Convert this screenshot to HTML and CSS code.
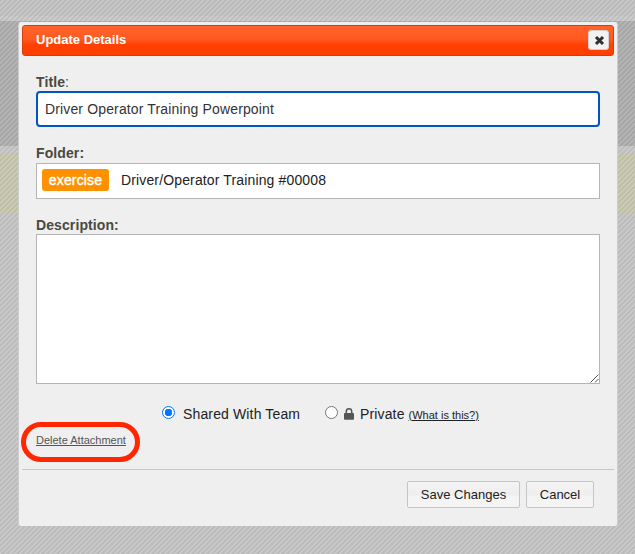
FILE: index.html
```html
<!DOCTYPE html>
<html lang="en">
<head>
<meta charset="utf-8">
<title>Update Details</title>
<link rel="stylesheet" href="styles.css">
</head>
<body>
<main class="dialog">
  <header class="titlebar">
    <h1>Update Details</h1>
    <button class="close" aria-label="Close"><svg width="11" height="11" viewBox="0 0 11 11"><path d="M2 2L9 9M9 2L2 9" stroke="#303030" stroke-width="3.1"/></svg></button>
  </header>
  <form class="form">
    <label class="label" for="title"><b>Title</b>:</label>
    <input class="title-input" id="title" type="text" value="Driver Operator Training Powerpoint">
    <div class="label folder-label"><b>Folder:</b></div>
    <div class="folder"><span class="tag">exercise</span><span>Driver/Operator Training #00008</span></div>
    <label class="label description-label" for="description"><b>Description:</b></label>
    <div class="area-wrap">
      <textarea class="area" id="description"></textarea>
      <svg class="grip" width="9" height="9" viewBox="0 0 9 9"><path d="M.5 8.5L8.5 .5M5 8.5L8.5 5" stroke="#555" stroke-width="1"/></svg>
    </div>
    <div class="sharing">
      <span class="radio checked"></span><span class="shared">Shared With Team</span>
      <span class="radio"></span>
      <svg class="lock" width="10" height="12" viewBox="0 0 10 12"><path d="M2.3 6V3.5a2.7 2.7 0 0 1 5.4 0V6" fill="none" stroke="#555" stroke-width="1.5"/><rect y="5" width="10" height="6.7" rx=".8" fill="#555"/></svg>
      <span class="private">Private</span><a class="help">(What is this?)</a>
    </div>
    <div class="delete-row"><a class="delete">Delete Attachment<span class="ring"></span></a></div>
  </form>
  <footer class="actions"><button class="button save">Save Changes</button><button class="button cancel">Cancel</button></footer>
</main>
</body>
</html>
```
FILE: styles.css
```css
* { box-sizing: border-box; }
html { height: 100%; }
body {
  margin: 0;
  height: 554px;
  padding: 22px 17px 0 18px;
  overflow: hidden;
  font: 14px/16px "Liberation Sans", Arial, sans-serif;
  color: #222;
  background:
    linear-gradient(135deg, #0000000d 25%, #ffffff12 25% 50%, #0000000d 50% 75%, #ffffff12 75%) 0 0 / 5px 5px,
    linear-gradient(#c5c5c5 0 16px, #cacaca 16px 21px, #b0b0b0 21px 146px, #c8c8c8 146px 153px, #c9c8b0 153px 213px, #c6c6c6 213px);
}
.dialog {
  height: 504px;
  padding: 3px 3px 0;
  background: #efefef;
  border-left: 1px solid #ccc;
  border-right: 1px solid #ccc;
  border-radius: 3px;
}
.titlebar {
  height: 31px;
  padding: 0 4px 0 13px;
  display: flex;
  align-items: center;
  justify-content: space-between;
  border: 1px solid #d33e0b;
  border-radius: 3px;
  background: linear-gradient(#ff632c, #ff5a20 45%, #ff4000 65%, #ff4000);
}
h1 { margin: 0 0 2px; color: #fff; font-size: 13px; line-height: 16px; }
.close {
  width: 21px; height: 20px; margin-bottom: 1px; padding: 0 0 0 1px;
  display: flex; align-items: center; justify-content: center;
  border: 1px solid #d2cfcc; border-radius: 3px;
  background: #f2f2f2;
}
.form { display: block; padding: 18px 14px 0; }
.label { display: block; height: 17px; color: #494940; letter-spacing: .1px; }
.title-input {
  display: block; width: 564px; height: 36px; padding: 0 7px;
  border: 2px solid #0054c4; border-radius: 4px; outline: 0;
  background: #fff; color: #333; font: inherit; letter-spacing: .14px;
}
.folder-label { height: 18px; margin-top: 18px; }
.folder {
  height: 36px; padding: 0 5px 2px; display: flex; align-items: center; gap: 12px;
  border: 1px solid #b5b5b5; background: #fff; letter-spacing: .14px;
}
.tag {
  width: 67px; height: 22px; line-height: 22px; text-align: center;
  background: #ff9100; color: #fff; border-radius: 3px; -webkit-text-stroke: .4px #fff;
}
.description-label { margin-top: 18px; }
.area-wrap { position: relative; height: 150px; }
.area { display: block; width: 564px; height: 150px; border: 1px solid #b5b5b5; background: #fff; resize: none; outline: 0; }
.grip { position: absolute; right: 1px; bottom: 1px; }
.sharing { display: flex; align-items: center; height: 24px; margin: 18px 0 0 126px; letter-spacing: .14px; }
.radio { width: 13px; height: 13px; margin-bottom: 3px; border: 1px solid #767676; border-radius: 50%; background: #fff; }
.checked { border-color: #0075ff; background: radial-gradient(circle, #0075ff 3.5px, #fff 4px); }
.shared { width: 142px; margin-left: 8px; }
.lock { margin: 0 6px 1px 6px; }
.help { margin: 1px 0 0 4px; font-size: 11px; letter-spacing: 0; text-decoration: underline; }
.delete-row { height: 43px; padding-top: 5px; }
.delete { position: relative; display: inline-block; font-size: 11px; color: #555; text-decoration: underline; }
.ring { position: absolute; left: -15px; top: -10px; width: 119px; height: 40px; border: 5px solid #ff2600; border-radius: 20px; }
.actions { border-top: 1px solid #c6c6c6; padding: 11px 20px 0; display: flex; gap: 6px; justify-content: flex-end; }
.button {
  height: 27px; padding: 0 0 1px; border: 1px solid #c5c5c5; border-radius: 2px;
  background: linear-gradient(#f4f4f4, #eee 50%, #f4f4f4 60%); color: #222;
  font: 13px "Liberation Sans", Arial, sans-serif;
}
.save { width: 113px; }
.cancel { width: 68px; }
```
